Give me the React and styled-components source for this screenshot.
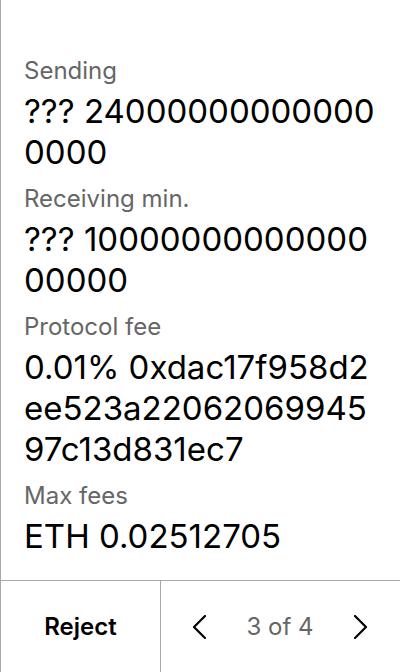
import React from "react";
import styled, { createGlobalStyle } from "styled-components";

const Global = createGlobalStyle`
  html, body { margin: 0; padding: 0; background: #ffffff; }
  body { font-family: Inter, "Noto Sans", sans-serif; }
  * { box-sizing: border-box; }
`;

const Screen = styled.div`
  width: 400px;
  height: 672px;
  display: flex;
  flex-direction: column;
  border-left: 1px solid #a8a8a8;
  background: #fff;
  overflow: hidden;
`;

const Body = styled.div`
  flex: 1;
  display: flex;
  flex-direction: column;
  gap: 10px;
  padding: 55px 20px 0 23px;
`;

const Field = styled.div`
  display: flex;
  flex-direction: column;
  gap: 4px;
`;

const Label = styled.div`
  font-size: 24px;
  line-height: 32px;
  color: #666666;
`;

const Value = styled.div`
  font-size: 33px;
  line-height: 41px;
  color: #000;
  word-break: break-all;
`;

const Footer = styled.div`
  height: 92px;
  flex-shrink: 0;
  display: flex;
  border-top: 1px solid #a8a8a8;
`;

const RejectButton = styled.button`
  width: 160px;
  border: none;
  border-right: 1px solid #a8a8a8;
  background: transparent;
  font-family: Inter, sans-serif;
  font-size: 24px;
  font-weight: 600;
  color: #000;
  padding: 0;
`;

const Pager = styled.div`
  flex: 1;
  display: flex;
  align-items: center;
  justify-content: space-between;
  padding: 0 32px 0 31px;
`;

const Arrow = styled.button`
  border: none;
  background: transparent;
  padding: 0;
  width: 14px;
  height: 24px;
  display: flex;
  align-items: center;
  justify-content: center;
`;

const PageText = styled.span`
  font-size: 24px;
  color: #666666;
`;

const Chevron = ({ dir }) => (
  <svg width="14" height="24" viewBox="0 0 14 24" fill="none">
    <path
      d={dir === "left" ? "M13 1 L2 12 L13 23" : "M1 1 L12 12 L1 23"}
      stroke="#000"
      strokeWidth="2.2"
      strokeLinecap="round"
      strokeLinejoin="round"
    />
  </svg>
);

const fields = [
  { label: "Sending", value: "??? 240000000000000000" },
  { label: "Receiving min.", value: "??? 1000000000000000000" },
  { label: "Protocol fee", value: "0.01% 0xdac17f958d2ee523a2206206994597c13d831ec7" },
  { label: "Max fees", value: "ETH 0.02512705" },
];

export default function App() {
  return (
    <>
      <Global />
      <Screen>
        <Body>
          {fields.map((f) => (
            <Field key={f.label}>
              <Label>{f.label}</Label>
              <Value>{f.value}</Value>
            </Field>
          ))}
        </Body>
        <Footer>
          <RejectButton>Reject</RejectButton>
          <Pager>
            <Arrow><Chevron dir="left" /></Arrow>
            <PageText>3 of 4</PageText>
            <Arrow><Chevron dir="right" /></Arrow>
          </Pager>
        </Footer>
      </Screen>
    </>
  );
}
